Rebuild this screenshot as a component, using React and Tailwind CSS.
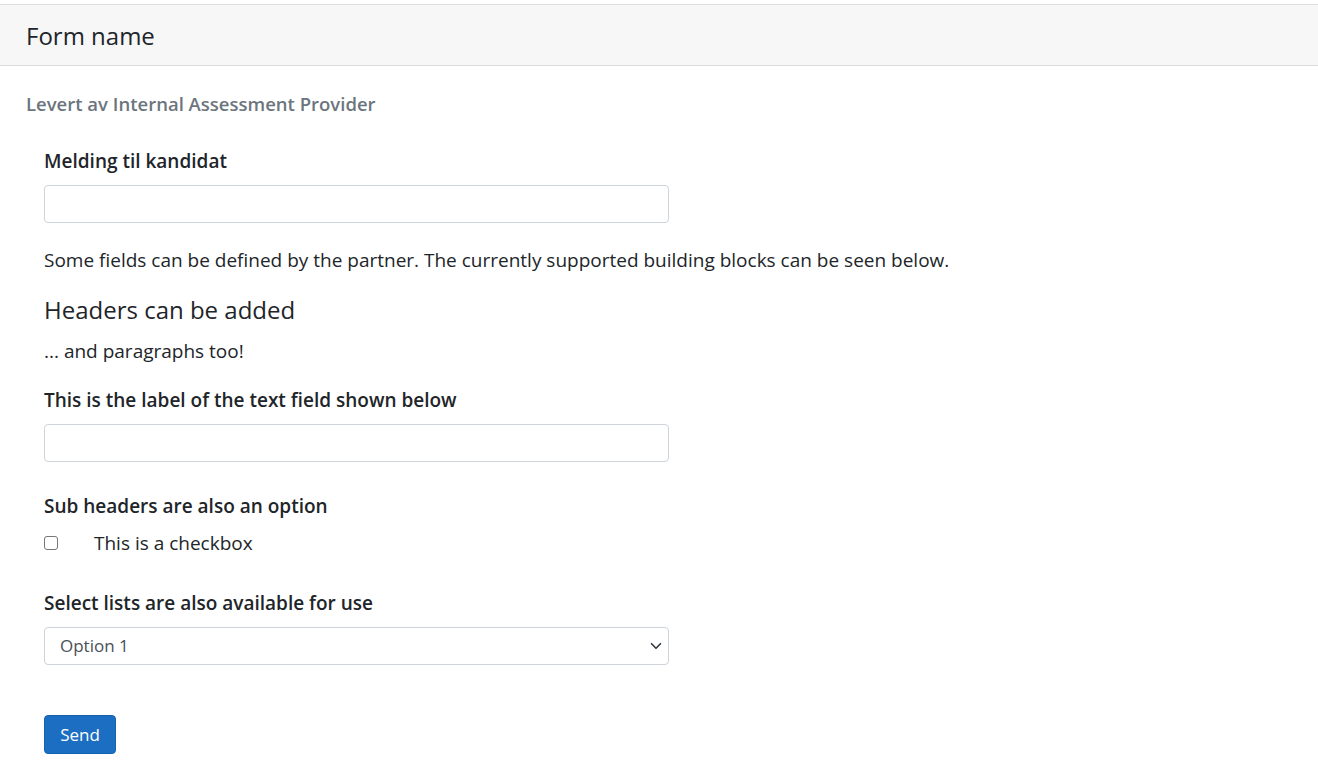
import React from 'react'

const font = { fontFamily: '"Open Sans", "Noto Sans", sans-serif' }

const Label = ({ children, className = '' }) => (
  <div className={`text-[19px] leading-6 font-semibold text-[#212529] ${className}`}>{children}</div>
)

const TextInput = ({ className = '' }) => (
  <input
    type="text"
    className={`block w-[625px] h-[38px] rounded-[4px] border border-[#ced4da] bg-white px-3 outline-none ${className}`}
  />
)

const App = () => {
  return (
    <div className="min-h-screen bg-white pt-[4px] text-[#212529]" style={font}>
      <div className="border-t border-[#dfdfdf]">
        <div className="h-[61px] bg-[#f7f7f7] border-b border-[#dcdcdc] flex items-center px-[26px] pt-[2px]">
          <h4 className="text-[24px] font-medium leading-[1.2]">Form name</h4>
        </div>

        <div className="px-[26px]">
          <div className="mt-[26px] text-[18.5px] leading-6 font-semibold text-[#6c757d]">
            Levert av Internal Assessment Provider
          </div>

          <form className="pl-[18px]" onSubmit={(e) => e.preventDefault()}>
            <Label className="mt-[33px]">Melding til kandidat</Label>
            <TextInput className="mt-[12px]" />

            <p className="mt-[25px] text-[19px] leading-6">
              Some fields can be defined by the partner. The currently supported building blocks can be seen below.
            </p>

            <h4 className="mt-[23px] text-[24px] font-medium leading-[29px]">Headers can be added</h4>
            <p className="mt-[15px] text-[19px] leading-6">... and paragraphs too!</p>

            <Label className="mt-[25px]">This is the label of the text field shown below</Label>
            <TextInput className="mt-[12px]" />

            <Label className="mt-[32px]">Sub headers are also an option</Label>
            <label className="mt-[13px] flex items-center h-6">
              <input
                type="checkbox"
                className="appearance-none w-[14px] h-[14px] rounded-[3px] border border-[#767676] bg-white m-0 -mt-[1px]"
              />
              <span className="ml-[36px] text-[19px] leading-6">This is a checkbox</span>
            </label>

            <Label className="mt-[36px]">Select lists are also available for use</Label>
            <div className="relative mt-[12px] w-[625px]">
              <select className="block w-full h-[38px] appearance-none rounded-[4px] border border-[#ced4da] bg-white pl-[15px] pr-9 text-[17px] text-[#495057] outline-none">
                <option>Option 1</option>
                <option>Option 2</option>
                <option>Option 3</option>
              </select>
              <svg
                className="pointer-events-none absolute right-[7px] top-[13px]"
                width="12"
                height="12"
                viewBox="0 0 16 16"
                fill="none"
                stroke="#343a40"
                strokeWidth="2.2"
                strokeLinecap="round"
                strokeLinejoin="round"
              >
                <path d="M2 5l6 6 6-6" />
              </svg>
            </div>

            <button
              type="submit"
              className="mt-[50px] h-[39px] w-[72px] rounded-[4px] border border-[#1861ac] bg-[#1b6ec2] text-white text-[17px]"
            >
              Send
            </button>
          </form>
        </div>
      </div>
    </div>
  )
}

export default App
